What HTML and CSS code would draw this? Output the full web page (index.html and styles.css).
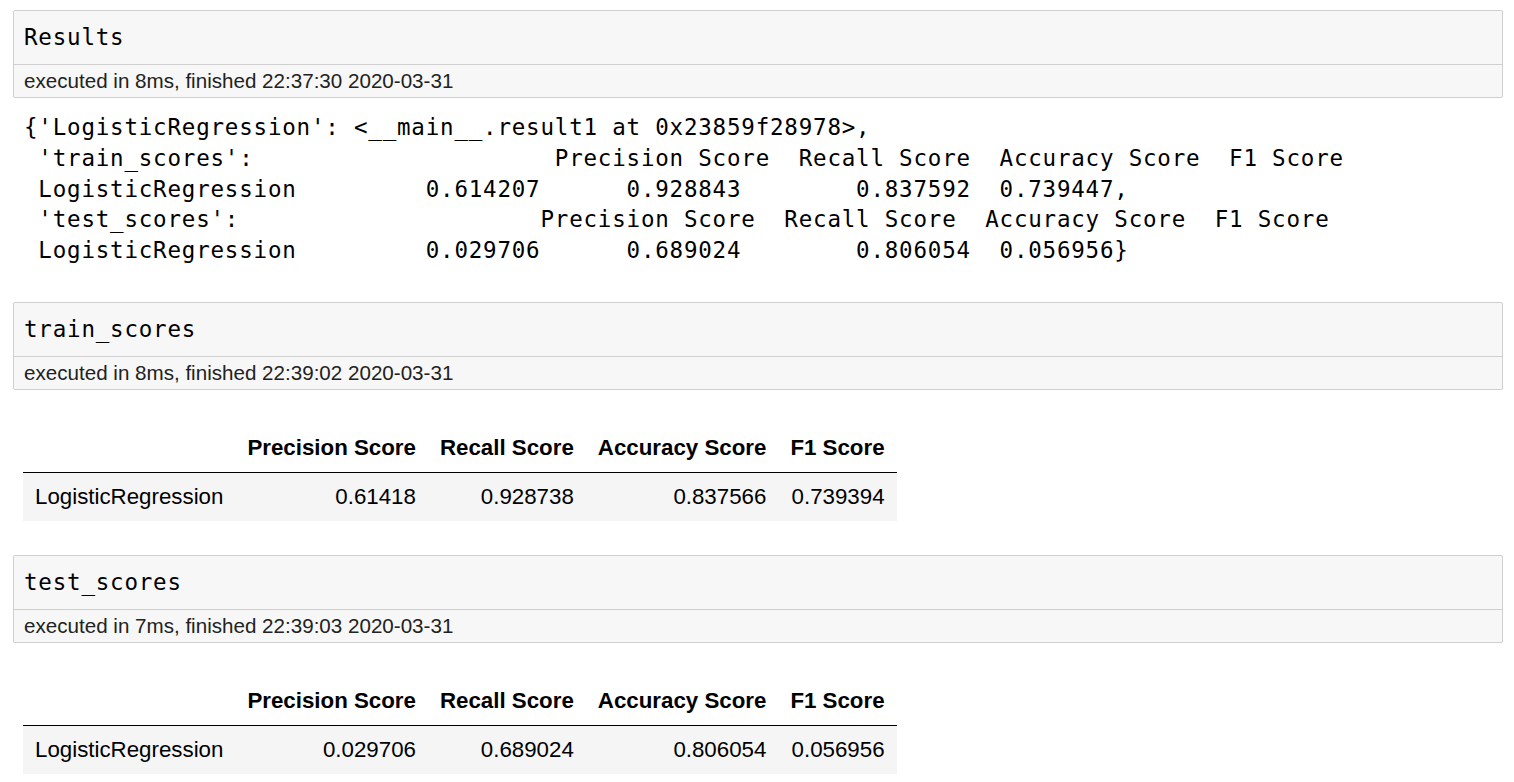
FILE: index.html
```html
<!DOCTYPE html>
<html>
<head>
<meta charset="utf-8">
<link rel="stylesheet" href="styles.css">
</head>
<body>
<div class="cell">
  <div class="input"><span class="code">Results</span></div>
  <div class="timing">executed in 8ms, finished 22:37:30 2020-03-31</div>
</div>
<div class="output-text">
<pre class="code">{'LogisticRegression': &lt;__main__.result1 at 0x23859f28978&gt;,
 'train_scores':                     Precision Score  Recall Score  Accuracy Score  F1 Score
 LogisticRegression         0.614207      0.928843        0.837592  0.739447,
 'test_scores':                     Precision Score  Recall Score  Accuracy Score  F1 Score
 LogisticRegression         0.029706      0.689024        0.806054  0.056956}</pre>
</div>
<div class="cell">
  <div class="input"><span class="code">train_scores</span></div>
  <div class="timing">executed in 8ms, finished 22:39:02 2020-03-31</div>
</div>
<div class="output-table">
  <table class="df">
    <thead>
      <tr><th></th><th>Precision Score</th><th>Recall Score</th><th>Accuracy Score</th><th>F1 Score</th></tr>
    </thead>
    <tbody>
      <tr><th>LogisticRegression</th><td>0.61418</td><td>0.928738</td><td>0.837566</td><td>0.739394</td></tr>
    </tbody>
  </table>
</div>
<div class="cell">
  <div class="input"><span class="code">test_scores</span></div>
  <div class="timing">executed in 7ms, finished 22:39:03 2020-03-31</div>
</div>
<div class="output-table">
  <table class="df">
    <thead>
      <tr><th></th><th>Precision Score</th><th>Recall Score</th><th>Accuracy Score</th><th>F1 Score</th></tr>
    </thead>
    <tbody>
      <tr><th>LogisticRegression</th><td>0.029706</td><td>0.689024</td><td>0.806054</td><td>0.056956</td></tr>
    </tbody>
  </table>
</div>
</body>
</html>
```
FILE: styles.css
```css
html, body {
  margin: 0;
  padding: 0;
  background: #ffffff;
}
body {
  padding-top: 10px;
  font-family: "Liberation Sans", Arial, sans-serif;
  color: #000;
}
.code {
  font-family: "DejaVu Sans Mono", "Liberation Mono", monospace;
  font-size: 22.5px;
  letter-spacing: 0.8px;
  color: #000;
}
.cell {
  margin: 0 11px 0 13px;
  border: 1px solid #cfcfcf;
  border-radius: 2px;
  background: #f7f7f7;
}
.input {
  height: 53px;
  line-height: 53px;
  padding: 0 10px;
  border-bottom: 1px solid #cfcfcf;
  white-space: pre;
}
.timing {
  height: 32px;
  line-height: 32px;
  padding: 0 10px;
  font-size: 20.6px;
  color: #222;
}
.output-text {
  padding: 14px 0 36px 24px;
}
.output-text pre {
  margin: 0;
  line-height: 30.75px;
}
.output-table {
  padding: 34px 0 34px 23px;
}
.df {
  border-collapse: collapse;
  border-spacing: 0;
  font-size: 22.3px;
  color: #000;
}
.df thead th {
  font-weight: bold;
  text-align: right;
  height: 48px;
  padding: 0 12px;
  border-bottom: 1px solid #000;
  vertical-align: middle;
}
.df tbody tr {
  background: #f5f5f5;
}
.df tbody th {
  font-weight: normal;
  text-align: left;
  height: 48px;
  padding: 0 12px;
}
.df td {
  text-align: right;
  height: 48px;
  padding: 0 12px;
}
```
